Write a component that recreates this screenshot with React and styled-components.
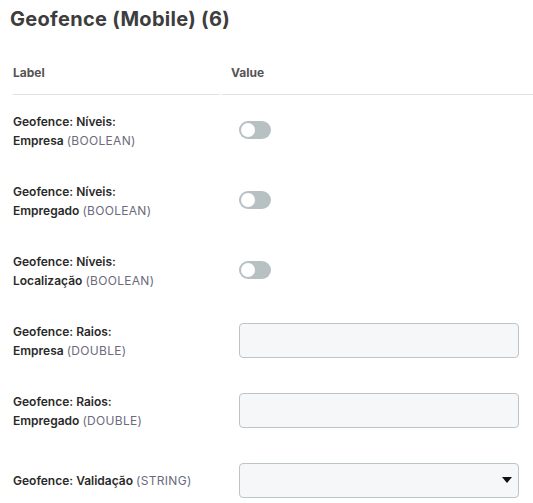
import React from "react";
import styled, { createGlobalStyle } from "styled-components";

const GlobalStyle = createGlobalStyle`
  body {
    margin: 0;
    background: #ffffff;
    font-family: Inter, "Noto Sans", sans-serif;
  }
`;

const fields = [
  { name: "Geofence: Níveis:", sub: "Empresa", type: "BOOLEAN", kind: "toggle" },
  { name: "Geofence: Níveis:", sub: "Empregado", type: "BOOLEAN", kind: "toggle" },
  { name: "Geofence: Níveis:", sub: "Localização", type: "BOOLEAN", kind: "toggle" },
  { name: "Geofence: Raios:", sub: "Empresa", type: "DOUBLE", kind: "input" },
  { name: "Geofence: Raios:", sub: "Empregado", type: "DOUBLE", kind: "input" },
  { name: "Geofence: Validação", sub: null, type: "STRING", kind: "select" },
];

export default function App() {
  return (
    <Page>
      <GlobalStyle />
      <Title>Geofence (Mobile) (6)</Title>
      <Table>
        <HeadCell>Label</HeadCell>
        <HeadCell $value>Value</HeadCell>
        {fields.map((f, i) => (
          <React.Fragment key={i}>
            <LabelCell>
              <LabelText>
                {f.name}
                {f.sub && <br />}
                {f.sub} <TypeText>({f.type})</TypeText>
              </LabelText>
            </LabelCell>
            <ValueCell>
              {f.kind === "toggle" && (
                <Toggle>
                  <Knob />
                </Toggle>
              )}
              {f.kind === "input" && <TextInput type="text" />}
              {f.kind === "select" && (
                <SelectBox>
                  <Caret />
                </SelectBox>
              )}
            </ValueCell>
          </React.Fragment>
        ))}
      </Table>
    </Page>
  );
}

const Page = styled.div`
  padding: 4px 0 0 0;
`;

const Title = styled.h2`
  margin: 0;
  padding-left: 10px;
  height: 30px;
  line-height: 30px;
  font-size: 20px;
  font-weight: 700;
  letter-spacing: 0.3px;
  color: #3d3d3d;
`;

const Table = styled.div`
  display: grid;
  grid-template-columns: 207px 1fr;
  column-gap: 2px;
  padding-left: 13px;
  margin-top: 16px;
`;

const HeadCell = styled.div`
  height: 44px;
  display: flex;
  align-items: center;
  padding-left: ${(p) => (p.$value ? "9px" : "0")};
  border-bottom: 1px solid #dbe3e5;
  font-size: 12px;
  font-weight: 700;
  color: #545454;
`;

const LabelCell = styled.div`
  height: 70px;
  display: flex;
  align-items: center;
`;

const LabelText = styled.div`
  font-size: 12px;
  line-height: 19px;
  font-weight: 600;
  color: #2a2a2a;
  padding-top: 1px;
`;

const TypeText = styled.span`
  font-weight: 400;
  letter-spacing: 0.3px;
  color: #6c6a7c;
`;

const ValueCell = styled.div`
  height: 70px;
  display: flex;
  align-items: center;
  padding-left: 17px;
`;

const Toggle = styled.div`
  width: 32px;
  height: 18px;
  border-radius: 9px;
  background: #b7c0c3;
  display: flex;
  align-items: center;
  padding-left: 2px;
  box-sizing: border-box;
`;

const Knob = styled.div`
  width: 14px;
  height: 14px;
  border-radius: 50%;
  background: #ffffff;
`;

const TextInput = styled.input`
  width: 280px;
  height: 35px;
  box-sizing: border-box;
  border: 1px solid #bcc6ca;
  border-radius: 4px;
  background: #f5f7f8;
  outline: none;
  margin: 0;
`;

const SelectBox = styled.div`
  width: 280px;
  height: 35px;
  box-sizing: border-box;
  border: 1px solid #bcc6ca;
  border-radius: 4px;
  background: #f5f7f8;
  display: flex;
  align-items: center;
  justify-content: flex-end;
  padding-right: 6px;
`;

const Caret = styled.div`
  width: 0;
  height: 0;
  border-left: 5px solid transparent;
  border-right: 5px solid transparent;
  border-top: 6px solid #111111;
`;
